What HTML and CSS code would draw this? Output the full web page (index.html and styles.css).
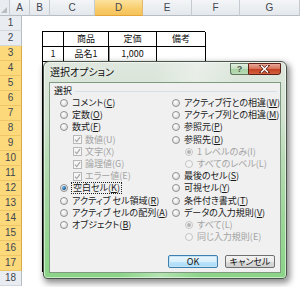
FILE: index.html
```html
<!DOCTYPE html>
<html lang="ja">
<head>
<meta charset="utf-8">
<title>選択オプション</title>
<link rel="stylesheet" href="styles.css">
</head>
<body>
<div class="sheet">
  <div class="colheads">
    <div class="corner"><svg width="6" height="6" viewBox="0 0 6 6"><polygon points="6,0 6,6 0,6" fill="#b9bcc0"/></svg></div>
    <div class="ch w-a">A</div>
    <div class="ch w-b">B</div>
    <div class="ch w-c">C</div>
    <div class="ch w-d sel">D</div>
    <div class="ch w-e">E</div>
    <div class="ch w-f">F</div>
    <div class="ch w-g">G</div>
  </div>
  <div class="body">
    <div class="rowheads">
      <div class="rh">1</div>
      <div class="rh">2</div>
      <div class="rh sel">3</div>
      <div class="rh sel">4</div>
      <div class="rh sel">5</div>
      <div class="rh sel">6</div>
      <div class="rh sel">7</div>
      <div class="rh sel">8</div>
      <div class="rh sel">9</div>
      <div class="rh sel">10</div>
      <div class="rh sel">11</div>
      <div class="rh sel">12</div>
      <div class="rh sel">13</div>
      <div class="rh sel">14</div>
      <div class="rh sel">15</div>
      <div class="rh sel">16</div>
      <div class="rh sel">17</div>
      <div class="rh">18</div>
    </div>
    <div class="cells">
      <div class="data">
        <div class="c"></div><div class="c">商品</div><div class="c">定価</div><div class="c">備考</div>
        <div class="c">1</div><div class="c">品名1</div><div class="c active">1,000</div><div class="c"></div>
        <div class="c"></div><div class="c"></div><div class="c"></div><div class="c"></div>
        <div class="c"></div><div class="c"></div><div class="c"></div><div class="c"></div>
        <div class="c"></div><div class="c"></div><div class="c"></div><div class="c"></div>
        <div class="c"></div><div class="c"></div><div class="c"></div><div class="c"></div>
        <div class="c"></div><div class="c"></div><div class="c"></div><div class="c"></div>
        <div class="c"></div><div class="c"></div><div class="c"></div><div class="c"></div>
        <div class="c"></div><div class="c"></div><div class="c"></div><div class="c"></div>
        <div class="c"></div><div class="c"></div><div class="c"></div><div class="c"></div>
        <div class="c"></div><div class="c"></div><div class="c"></div><div class="c"></div>
        <div class="c"></div><div class="c"></div><div class="c"></div><div class="c"></div>
        <div class="c"></div><div class="c"></div><div class="c"></div><div class="c"></div>
        <div class="c"></div><div class="c"></div><div class="c"></div><div class="c"></div>
        <div class="c"></div><div class="c"></div><div class="c"></div><div class="c"></div>
        <div class="c"></div><div class="c"></div><div class="c"></div><div class="c"></div>
      </div>
    </div>
  </div>

  <div class="dialog">
    <div class="titlebar">
      <span class="title">選択オプション</span>
      <div class="capbtns">
        <div class="cap help">?</div>
        <div class="cap close"><svg width="11" height="8" viewBox="0 0 11 8"><path d="M2 0.5 L9 7.5 M9 0.5 L2 7.5" stroke="#5a1a10" stroke-width="2.8" stroke-linecap="square"/><path d="M2 0.5 L9 7.5 M9 0.5 L2 7.5" stroke="#fff" stroke-width="1.5"/></svg></div>
      </div>
    </div>
    <div class="panel">
      <div class="legend"><span>選択</span></div>
      <div class="cols">
        <div class="col left">
          <div class="opt"><span class="radio"></span><span>コメント(<u>C</u>)</span></div>
          <div class="opt"><span class="radio"></span><span>定数(<u>O</u>)</span></div>
          <div class="opt"><span class="radio"></span><span>数式(<u>F</u>)</span></div>
          <div class="opt sub dis"><span class="check"><svg width="7" height="7" viewBox="0 0 7 7"><path d="M1 3.6 L2.8 5.6 L6 1.2" fill="none" stroke="#a6a6a6" stroke-width="1.2"/></svg></span><span>数値(U)</span></div>
          <div class="opt sub dis"><span class="check"><svg width="7" height="7" viewBox="0 0 7 7"><path d="M1 3.6 L2.8 5.6 L6 1.2" fill="none" stroke="#a6a6a6" stroke-width="1.2"/></svg></span><span>文字(X)</span></div>
          <div class="opt sub dis"><span class="check"><svg width="7" height="7" viewBox="0 0 7 7"><path d="M1 3.6 L2.8 5.6 L6 1.2" fill="none" stroke="#a6a6a6" stroke-width="1.2"/></svg></span><span>論理値(G)</span></div>
          <div class="opt sub dis"><span class="check"><svg width="7" height="7" viewBox="0 0 7 7"><path d="M1 3.6 L2.8 5.6 L6 1.2" fill="none" stroke="#a6a6a6" stroke-width="1.2"/></svg></span><span>エラー値(E)</span></div>
          <div class="opt"><span class="radio on"></span><span class="focus">空白セル(<u>K</u>)</span></div>
          <div class="opt"><span class="radio"></span><span>アクティブ セル領域(<u>R</u>)</span></div>
          <div class="opt"><span class="radio"></span><span>アクティブ セルの配列(<u>A</u>)</span></div>
          <div class="opt"><span class="radio"></span><span>オブジェクト(<u>B</u>)</span></div>
        </div>
        <div class="col right">
          <div class="opt"><span class="radio"></span><span>アクティブ行との相違(<u>W</u>)</span></div>
          <div class="opt"><span class="radio"></span><span>アクティブ列との相違(<u>M</u>)</span></div>
          <div class="opt"><span class="radio"></span><span>参照元(<u>P</u>)</span></div>
          <div class="opt"><span class="radio"></span><span>参照先(<u>D</u>)</span></div>
          <div class="opt sub dis"><span class="radio on"></span><span>1 レベルのみ(I)</span></div>
          <div class="opt sub dis"><span class="radio"></span><span>すべてのレベル(L)</span></div>
          <div class="opt"><span class="radio"></span><span>最後のセル(<u>S</u>)</span></div>
          <div class="opt"><span class="radio"></span><span>可視セル(<u>Y</u>)</span></div>
          <div class="opt"><span class="radio"></span><span>条件付き書式(<u>T</u>)</span></div>
          <div class="opt"><span class="radio"></span><span>データの入力規則(<u>V</u>)</span></div>
          <div class="opt sub dis"><span class="radio on"></span><span>すべて(L)</span></div>
          <div class="opt sub dis"><span class="radio"></span><span>同じ入力規則(E)</span></div>
        </div>
      </div>
      <div class="buttons">
        <div class="btn default">OK</div>
        <div class="btn">キャンセル</div>
      </div>
    </div>
  </div>
</div>
</body>
</html>
```

FILE: styles.css
```css
* { box-sizing: border-box; }
html, body { margin: 0; padding: 0; }
body {
  width: 300px;
  height: 287px;
  overflow: hidden;
  background: #fff;
  font-family: "Noto Sans CJK JP", "Noto Sans", sans-serif;
  color: #000;
}
.sheet { position: relative; width: 300px; height: 287px; overflow: hidden; }

/* column headers */
.colheads { display: flex; height: 16px; }
.corner {
  width: 22px; height: 16px;
  background: #e9ecf0;
  border-right: 1px solid #c6cbd1;
  border-bottom: 1px solid #b7bdc4;
  display: flex; align-items: flex-end; justify-content: flex-end;
  padding: 0 2px 2px 0;
}
.ch {
  height: 16px;
  flex: none;
  background: linear-gradient(#f3f5f7, #e4e8ec);
  border-right: 1px solid #c6cbd1;
  border-bottom: 1px solid #b7bdc4;
  font-family: "Liberation Sans", "Noto Sans", sans-serif;
  font-size: 10px;
  line-height: 15px;
  text-align: center;
  color: #3f4650;
}
.ch.sel {
  background: linear-gradient(#fde39f, #f8cc6a 60%, #f5c25a);
  border-bottom-color: #e3a53a;
  border-right-color: #e0b870;
}
.w-a { width: 20px; }
.w-b { width: 20px; }
.w-c { width: 45px; }
.w-d { width: 48px; }
.w-e { width: 49px; }
.w-f { width: 48px; }
.w-g { width: 60px; }

.body { display: flex; }
.rowheads { width: 22px; flex: none; }
.rh {
  height: 15px;
  background: #e9ecf0;
  border-right: 1px solid #b7bdc4;
  border-bottom: 1px solid #d3d7dc;
  font-family: "Liberation Sans", "Noto Sans", sans-serif;
  font-size: 10px;
  line-height: 14px;
  text-align: center;
  color: #3f4650;
}
.rh.sel {
  background: #fcd97a;
  border-bottom-color: #efc56a;
  border-right-color: #d9a847;
}

.cells { flex: 1; padding: 15px 0 0 20px; }
.data {
  display: grid;
  grid-template-columns: 21px 45px 48px 49px;
  grid-auto-rows: 15px;
  width: 163px;
  border-left: 1px solid #000;
  border-top: 1px solid #000;
}
.c {
  border-right: 1px solid #000;
  border-bottom: 1px solid #000;
  font-size: 9px;
  line-height: 14px;
  text-align: center;
  color: #111;
}
.c.active { box-shadow: inset 1px 0 0 #9a9a9a; }

/* dialog */
.dialog {
  position: absolute;
  left: 43px;
  top: 61px;
  width: 244px;
  height: 218px;
  border: 1px solid #4a5549;
  border-radius: 6px 6px 4px 4px;
  padding: 0 5px 5px 5px;
  display: flex;
  flex-direction: column;
  background:
    linear-gradient(100deg, rgba(255,255,255,0) 40%, rgba(255,255,255,0.35) 55%, rgba(255,255,255,0) 70%),
    linear-gradient(#dfe7de 0%, #d3e3d1 25%, #b8dcb5 45%, #9fd69b 70%, #8ad487 100%);
  box-shadow: inset 0 0 0 1px rgba(255,255,255,0.55), 2px 3px 6px 1px rgba(0,0,0,0.45);
}
.titlebar {
  height: 20px;
  display: flex;
  align-items: flex-start;
  flex: none;
}
.title {
  flex: 1;
  font-size: 10px;
  line-height: 20px;
  padding-left: 1px;
  padding-top: 0;
  color: #0c0c0c;
  font-feature-settings: "palt";
  text-shadow: 0 0 4px rgba(255,255,255,0.9);
}
.capbtns { display: flex; margin-top: 1px; }
.cap {
  height: 12px;
  display: flex;
  align-items: center;
  justify-content: center;
}
.help {
  width: 18px;
  border: 1px solid #5f7560;
  border-right: none;
  border-radius: 0 0 0 3px;
  background: linear-gradient(#e3efe1, #c3dec0 50%, #a8d2a4 51%, #b9dcb5);
  font-family: "Liberation Sans", sans-serif;
  font-weight: bold;
  font-size: 9px;
  line-height: 10px;
  color: #4e5a50;
}
.close {
  width: 33px;
  border: 1px solid #5b2016;
  border-radius: 0 0 3px 0;
  background: linear-gradient(#e9a898, #d9745d 45%, #c2401f 50%, #d3603f);
}

.panel {
  flex: 1;
  border: 1px solid #7f9a80;
  background: #f0f0f0;
  display: flex;
  flex-direction: column;
  padding: 1px 0 4px 0;
}
.legend {
  display: flex;
  align-items: center;
  height: 12px;
  margin-top: 0;
  padding-left: 4px;
  padding-right: 3px;
  font-size: 9px;
  gap: 3px;
  color: #111;
}
.legend::after {
  content: "";
  flex: 1;
  height: 1px;
  background: #d5dfe5;
  margin-top: 2px;
}
.cols { display: flex; padding-left: 10px; margin-top: 1px; }
.col.left { width: 112px; flex: none; }
.col.right { flex: 1; }
.opt {
  height: 12.2px;
  display: flex;
  align-items: center;
  gap: 4px;
  font-size: 9px;
  line-height: 10px;
  white-space: nowrap;
  font-feature-settings: "palt";
  color: #1a1a1a;
}
.opt u { text-decoration-thickness: 1px; text-underline-offset: 1px; }
.opt.sub { padding-left: 13px; }
.opt.dis { color: #a3a3a3; }

.radio {
  width: 8px;
  height: 8px;
  flex: none;
  border-radius: 50%;
  border: 1px solid #8f9090;
  background: radial-gradient(circle at 35% 30%, #ffffff 0%, #e6e6e6 60%, #d2d2d2 100%);
  position: relative;
}
.radio.on::after {
  content: "";
  position: absolute;
  left: 1px; top: 1px;
  width: 4px; height: 4px;
  border-radius: 50%;
  background: radial-gradient(circle at 35% 35%, #6ab8ef, #1a5d97 60%, #0c2f52);
}
.dis .radio { border-color: #c5c5c5; background: #f4f4f4; }
.dis .radio.on::after { background: #b4b4b4; }

.check {
  width: 9px;
  height: 9px;
  flex: none;
  border: 1px solid #b8b8b8;
  background: #f6f6f6;
  display: flex;
  align-items: center;
  justify-content: center;
  margin-right: -1px;
}
.focus { outline: 1px dotted #222; outline-offset: 0; padding: 0 1px; }

.buttons {
  margin-top: auto;
  display: flex;
  justify-content: flex-end;
  gap: 7px;
  padding-right: 5px;
}
.btn {
  width: 50px;
  height: 13px;
  border: 1px solid #707070;
  border-radius: 2px;
  background: linear-gradient(#f2f2f2, #ebebeb 50%, #dddddd 51%, #cfcfcf);
  font-size: 9px;
  line-height: 11px;
  text-align: center;
  color: #111;
  font-feature-settings: "palt";
}
.btn.default {
  border-color: #3c7fb1;
  box-shadow: inset 0 0 0 1px #c6e2f5;
  background: linear-gradient(#eaf6fd, #d9f0fc 50%, #bee6fd 51%, #a7d9f5);
}
```
